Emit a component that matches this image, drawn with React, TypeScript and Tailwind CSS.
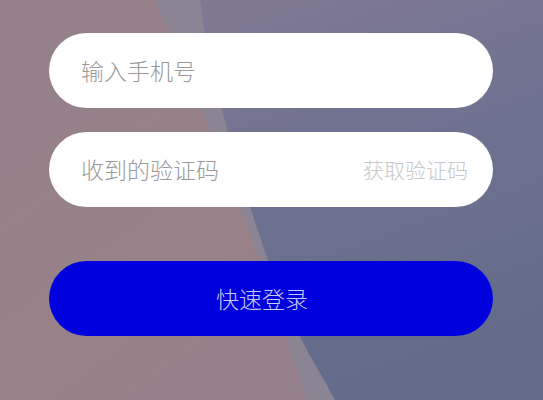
import React from 'react';

const font = { fontFamily: '"Noto Sans CJK SC", "Noto Sans", sans-serif' };

// 背景の斜めの帯（装飾）
function Backdrop() {
  return (
    <svg className="absolute inset-0 w-full h-full" viewBox="0 0 543 400" preserveAspectRatio="none">
      <defs>
        <linearGradient id="pink" x1="0" y1="0" x2="1" y2="1">
          <stop offset="0" stopColor="#94818b" />
          <stop offset="0.5" stopColor="#988188" />
          <stop offset="1" stopColor="#90808e" />
        </linearGradient>
        <linearGradient id="blue" x1="0" y1="0" x2="0.3" y2="1">
          <stop offset="0" stopColor="#817993" />
          <stop offset="0.5" stopColor="#6e7290" />
          <stop offset="1" stopColor="#646c8b" />
        </linearGradient>
      </defs>
      <rect width="543" height="400" fill="url(#pink)" />
      <path d="M155 0 Q 225 150 307 400 L 543 400 L 543 0 Z" fill="#8b8593" />
      <path d="M200 0 C 210 80 240 180 268 260 S 320 370 335 400 L 543 400 L 543 0 Z" fill="url(#blue)" />
    </svg>
  );
}

export default function App() {
  return (
    <div className="relative w-full h-[400px] overflow-hidden" style={font}>
      <Backdrop />
      <div className="relative flex flex-col pt-[33px] pl-[49px] pr-[50px]">
        <div className="h-[75px] rounded-full bg-white flex items-center pl-[32px]">
          <span className="text-[23px] font-light text-[#9a9a9a]">输入手机号</span>
        </div>
        <div className="mt-[24px] h-[75px] rounded-full bg-white flex items-center justify-between pl-[32px] pr-[25px]">
          <span className="text-[23px] font-light text-[#9a9a9a]">收到的验证码</span>
          <span className="text-[21px] font-light text-[#c8c8c8]">获取验证码</span>
        </div>
        <button className="mt-[54px] h-[75px] rounded-full bg-[#0000de] flex items-center justify-center pr-[18px]">
          <span className="text-[23px] font-light text-[#c8c8f0]">快速登录</span>
        </button>
      </div>
    </div>
  );
}
